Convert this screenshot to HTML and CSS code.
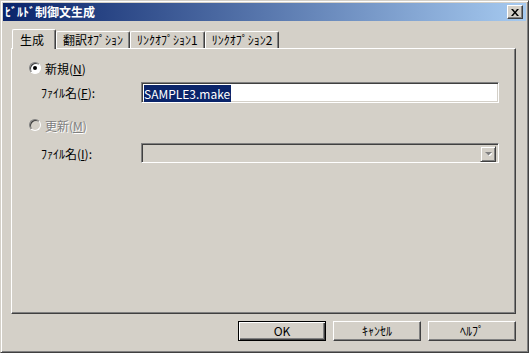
FILE: index.html
```html
<!DOCTYPE html>
<html lang="ja">
<head>
  <meta charset="UTF-8" />
  <title>ﾋﾞﾙﾄﾞ制御文生成</title>
  <link rel="stylesheet" href="styles.css">
</head>
<body>

  <div class="window">
    <!-- Title bar -->
    <div class="titlebar">
      <span class="title">ﾋﾞﾙﾄﾞ制御文生成</span>
      <div class="close-btn">
        <svg width="8" height="7" viewBox="0 0 8 7">
          <path d="M0 0h2l2 2.5L6 0h2L5 3.5L8 7H6L4 4.5L2 7H0l3-3.5z" fill="#000" />
        </svg>
      </div>
    </div>

    <div class="dialog-body">
      <!-- Tabs -->
      <div class="tabs">
        <div class="tab active">生成</div>
        <div class="tab">翻訳ｵﾌﾟｼｮﾝ</div>
        <div class="tab">ﾘﾝｸｵﾌﾟｼｮﾝ1</div>
        <div class="tab">ﾘﾝｸｵﾌﾟｼｮﾝ2</div>
      </div>

      <div class="panel">
        <div class="radio-row">
          <span class="radio checked"></span>
          <span>新規(<u>N</u>)</span>
        </div>
        <div class="field-row">
          <span class="field-label">ﾌｧｲﾙ名(<u>F</u>):</span>
          <div class="textbox"><span class="selection">SAMPLE3.make</span></div>
        </div>

        <div class="radio-row second disabled">
          <span class="radio"></span>
          <span>更新(<u>M</u>)</span>
        </div>
        <div class="field-row combo-row">
          <span class="field-label">ﾌｧｲﾙ名(<u>I</u>):</span>
          <div class="combobox">
            <div class="combo-btn">
              <svg width="7" height="4" viewBox="0 0 7 4">
                <path d="M1 1h7L4.5 4.5z" fill="#fff" />
                <path d="M0 0h7L3.5 3.5z" fill="#808080" />
              </svg>
            </div>
          </div>
        </div>
      </div>

      <!-- Buttons -->
      <div class="button-row">
        <div class="button default">OK</div>
        <div class="button">ｷｬﾝｾﾙ</div>
        <div class="button">ﾍﾙﾌﾟ</div>
      </div>
    </div>
  </div>

</body>
</html>
```

FILE: styles.css
```css
:root {
  --face: #d4d0c8;
  --shadow: #808080;
  --dark: #404040;
  --light: #ffffff;
  --navy: #0a246a;
}

body {
  margin: 0;
  background: var(--face);
  font-family: "Noto Sans CJK JP", "Noto Sans", sans-serif;
  font-size: 12px;
  color: #000;
}

.window {
  width: 529px;
  height: 353px;
  box-sizing: border-box;
  background: var(--face);
  border: 1px solid;
  border-color: var(--face) var(--dark) var(--dark) var(--face);
  box-shadow: inset 1px 1px var(--light), inset -1px -1px var(--shadow);
  padding: 2px;
  display: flex;
  flex-direction: column;
}

.titlebar {
  height: 18px;
  display: flex;
  align-items: center;
  justify-content: space-between;
  padding: 0 3px 0 2px;
  background: linear-gradient(to right, var(--navy), #a6caf0);
  color: #fff;
}

.title {
  font-weight: bold;
  font-size: 12px;
  line-height: 18px;
}

.close-btn {
  width: 16px;
  height: 14px;
  box-sizing: border-box;
  background: var(--face);
  border: 1px solid;
  border-color: var(--light) var(--dark) var(--dark) var(--light);
  box-shadow: inset -1px -1px var(--shadow);
  display: flex;
  align-items: center;
  justify-content: center;
}

.dialog-body {
  padding: 0 8px 0 8px;
  display: flex;
  flex-direction: column;
}

.tabs {
  margin-top: 8px;
  height: 19px;
  display: flex;
  align-items: flex-end;
  padding-left: 1px;
  position: relative;
  z-index: 2;
}

.tab {
  height: 17px;
  box-sizing: border-box;
  padding: 0 6px;
  line-height: 16px;
  border: 1px solid;
  border-bottom: none;
  border-color: var(--light) var(--dark) var(--dark) var(--light);
  box-shadow: inset -1px 0 var(--shadow);
  border-radius: 2px 2px 0 0;
  background: var(--face);
  white-space: nowrap;
}

.tab.active {
  height: 20px;
  margin-bottom: -1px;
  padding: 0 11px 0 7px;
  line-height: 20px;
}

.panel {
  width: 505px;
  height: 266px;
  box-sizing: border-box;
  border: 1px solid;
  border-color: var(--light) var(--dark) var(--dark) var(--light);
  box-shadow: inset -1px -1px var(--shadow);
  padding: 9px 0 0 17px;
  position: relative;
  z-index: 1;
}

.radio-row {
  height: 20px;
  display: flex;
  align-items: center;
  gap: 4px;
}

.radio-row.second {
  margin-top: 12px;
}

.radio {
  width: 12px;
  height: 12px;
  box-sizing: border-box;
  border-radius: 50%;
  border: 1px solid;
  border-color: var(--shadow) var(--light) var(--light) var(--shadow);
  box-shadow: inset 1px 1px var(--dark);
  background: #fff;
  display: flex;
  align-items: center;
  justify-content: center;
}

.radio.checked::after {
  content: "";
  width: 4px;
  height: 4px;
  border-radius: 50%;
  background: #000;
}

.disabled {
  color: var(--shadow);
  text-shadow: 1px 1px var(--light);
}

.disabled .radio {
  background: var(--face);
}

.field-row {
  margin-top: 4px;
  height: 21px;
  display: flex;
  align-items: center;
  padding-left: 12px;
}

.combo-row {
  margin-top: 8px;
  height: 20px;
}

.field-label {
  width: 100px;
  white-space: nowrap;
}

.textbox,
.combobox {
  width: 358px;
  height: 21px;
  box-sizing: border-box;
  border: 1px solid;
  border-color: var(--shadow) var(--light) var(--light) var(--shadow);
  box-shadow: inset 1px 1px var(--dark), inset -1px -1px var(--face);
  background: #fff;
  padding: 2px 0 0 2px;
}

.selection {
  display: inline-block;
  background: var(--navy);
  color: #fff;
  line-height: 17px;
  height: 17px;
  padding-right: 1px;
}

.combobox {
  height: 20px;
  background: var(--face);
  display: flex;
  justify-content: flex-end;
  padding: 2px 2px 0 0;
}

.combo-btn {
  width: 16px;
  height: 16px;
  box-sizing: border-box;
  border: 1px solid;
  border-color: var(--face) var(--dark) var(--dark) var(--face);
  box-shadow: inset 1px 1px var(--light), inset -1px -1px var(--shadow);
  display: flex;
  align-items: center;
  justify-content: center;
}

.button-row {
  margin-top: 7px;
  width: 505px;
  display: flex;
  justify-content: flex-end;
  gap: 7px;
}

.button {
  width: 88px;
  height: 20px;
  box-sizing: border-box;
  border: 1px solid;
  border-color: var(--light) var(--dark) var(--dark) var(--light);
  box-shadow: inset -1px -1px var(--shadow);
  text-align: center;
  line-height: 18px;
}

.button.default {
  border: 1px solid #000;
  box-shadow: inset 1px 1px var(--light), inset -1px -1px var(--dark), inset -2px -2px var(--shadow);
}
```
